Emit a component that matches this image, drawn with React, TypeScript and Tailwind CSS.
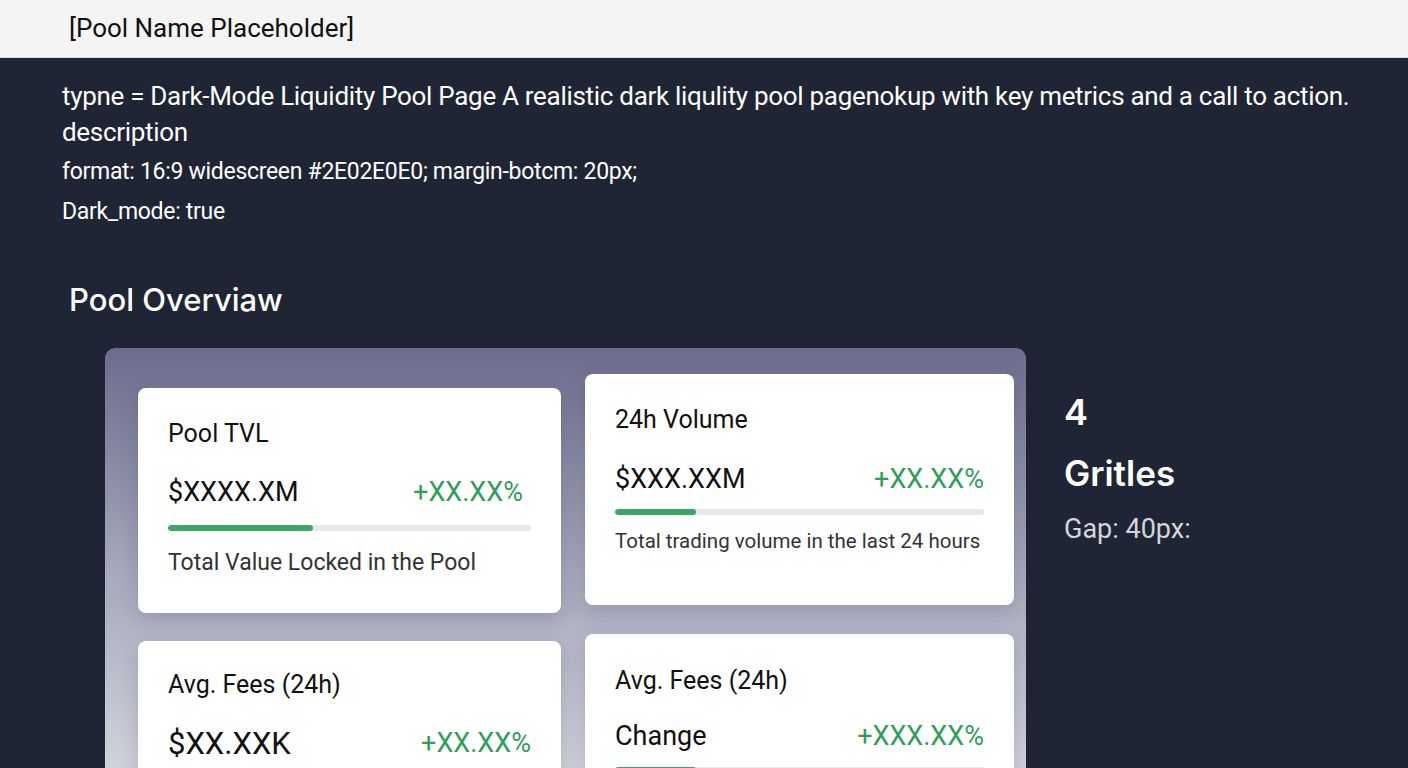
import React from 'react';

interface Metric {
  title: string;
  value: string;
  change: string;
  fill: number;
  note?: string;
}

interface CardProps {
  m: Metric;
  className?: string;
  valueGap?: string;
  valueSize?: string;
  changeInset?: string;
  barGap?: string;
  noteClass?: string;
}

const MetricCard: React.FC<CardProps> = ({
  m,
  className = '',
  valueGap = 'mt-[32px]',
  valueSize = 'text-[27px]',
  changeInset = '',
  barGap = 'mt-[20px]',
  noteClass = 'mt-[20px] text-[23px]',
}) => (
  <div className={`shrink-0 bg-white rounded-[8px] shadow-[0_6px_20px_rgba(30,35,60,0.18)] px-[30px] ${className}`}>
    <div className="text-[25px] leading-none text-[#111]">{m.title}</div>
    <div className={`flex items-center justify-between ${valueGap} leading-none`}>
      <span className={`text-[#111] ${valueSize}`}>{m.value}</span>
      <span className={`text-[#2f9e5a] text-[27px] ${changeInset}`}>{m.change}</span>
    </div>
    <div className={`${barGap} h-[6px] rounded-full bg-[#e9e9ea] overflow-hidden`}>
      <div className="h-full rounded-full bg-[#3aa865]" style={{ width: `${m.fill}%` }} />
    </div>
    {m.note && <div className={`leading-none text-[#333] whitespace-nowrap ${noteClass}`}>{m.note}</div>}
  </div>
);

export default function App() {
  return (
    <div className="w-[1408px] h-[768px] overflow-hidden bg-[#1f2535] text-white" style={{ fontFamily: 'Roboto, "Liberation Sans", sans-serif' }}>
      <header className="h-[58px] bg-[#f4f4f4] border-b border-[#d9d9d9] flex items-center pl-[69px]">
        <span className="text-[26px] text-[#111]">[Pool Name Placeholder]</span>
      </header>

      <div className="pl-[62px] pt-[20px]">
        <p className="text-[26px] leading-[36px] tracking-[-0.3px]">
          typne = Dark-Mode Liquidity Pool Page A realistic dark liqulity pool pagenokup with key metrics and a call to action.
        </p>
        <p className="text-[26px] leading-[36px] tracking-[-0.3px]">description</p>
        <p className="text-[23px] leading-[40px] mt-[2px] tracking-[-0.3px]">format: 16:9 widescreen #2E02E0E0; margin-botcm: 20px;</p>
        <p className="text-[23px] leading-[40px] tracking-[-0.3px]">Dark_mode: true</p>
      </div>

      <h2 className="pl-[69px] mt-[52px] text-[31px] leading-none font-medium" style={{ fontFamily: 'Inter, Roboto, sans-serif' }}>
        Pool Overviaw
      </h2>

      <div className="flex mt-[33px]">
        <div className="ml-[105px] w-[921px] h-[460px] rounded-[10px] bg-gradient-to-b from-[#6c6d8d] via-[#a8aabd] to-[#d9dbe2] flex gap-[24px] pl-[33px]">
          <div className="w-[423px] flex flex-col">
            <MetricCard
              className="mt-[40px] h-[225px] pt-[33px]"
              valueGap="mt-[33px]"
              changeInset="mr-[8px]"
              barGap="mt-[19px]"
              m={{ title: 'Pool TVL', value: '$XXXX.XM', change: '+XX.XX%', fill: 40, note: 'Total Value Locked in the Pool' }}
            />
            <MetricCard
              className="mt-[28px] h-[200px] pt-[31px]"
              valueGap="mt-[31px]"
              valueSize="text-[31px]"
              m={{ title: 'Avg. Fees (24h)', value: '$XX.XXK', change: '+XX.XX%', fill: 0 }}
            />
          </div>
          <div className="w-[429px] flex flex-col">
            <MetricCard
              className="mt-[26px] h-[231px] pt-[33px]"
              valueGap="mt-[34px]"
              barGap="mt-[16px]"
              noteClass="mt-[16px] text-[20.5px]"
              m={{ title: '24h Volume', value: '$XXX.XXM', change: '+XX.XX%', fill: 22, note: 'Total trading volume in the last 24 hours' }}
            />
            <MetricCard
              className="mt-[29px] h-[200px] pt-[34px]"
              valueGap="mt-[30px]"
              barGap="mt-[17px]"
              m={{ title: 'Avg. Fees (24h)', value: 'Change', change: '+XXX.XX%', fill: 22 }}
            />
          </div>
        </div>

        <div className="ml-[38px] pt-[46px]" style={{ fontFamily: 'Inter, Roboto, sans-serif' }}>
          <div className="text-[36px] leading-none font-semibold">4</div>
          <div className="text-[35px] leading-none font-semibold mt-[26px]">Gritles</div>
          <div className="text-[27px] leading-none text-[#d4d6dc] mt-[25px]" style={{ fontFamily: 'Roboto, sans-serif' }}>Gap: 40px:</div>
        </div>
      </div>
    </div>
  );
}
